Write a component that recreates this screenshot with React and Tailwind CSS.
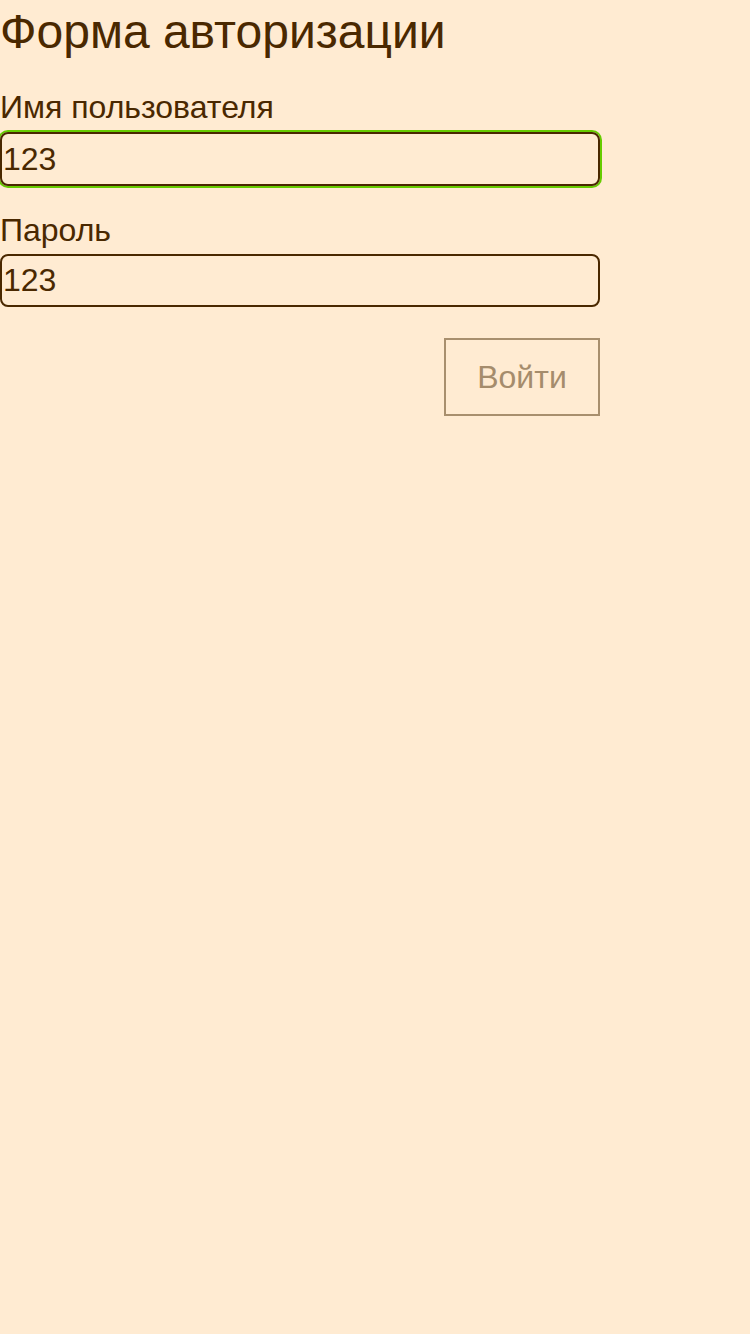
import React, { useState } from "react";

export default function App() {
  const [login, setLogin] = useState("123");
  const [password, setPassword] = useState("123");

  return (
    <div className="min-h-screen bg-[#ffebd2] text-[#4a2800] [font-family:'Liberation_Sans',Arial,sans-serif]">
      <form className="flex w-[600px] flex-col" onSubmit={(e) => e.preventDefault()}>
        <h1 className="pt-[4px] text-[48px] leading-[55px]">Форма авторизации</h1>

        <label className="mt-[30px] text-[32px] leading-[37px]" htmlFor="login">
          Имя пользователя
        </label>
        <input
          id="login"
          value={login}
          onChange={(e) => setLogin(e.target.value)}
          className="mt-[6px] h-[54px] w-full rounded-[8px] border-2 border-[#4a2800] bg-transparent px-[1px] text-[32px] text-[#4a2800] shadow-[0_0_0_2px_#66cc00] outline-none"
        />

        <label className="mt-[26px] text-[32px] leading-[37px]" htmlFor="password">
          Пароль
        </label>
        <input
          id="password"
          type="text"
          value={password}
          onChange={(e) => setPassword(e.target.value)}
          className="mt-[5px] h-[53px] w-full rounded-[8px] border-2 border-[#4a2800] bg-transparent px-[1px] text-[32px] text-[#4a2800] outline-none"
        />

        <div className="mt-[31px] flex justify-end">
          <button
            type="submit"
            disabled
            className="h-[78px] w-[156px] border-2 border-[#a88f6e] text-[32px] text-[#a58c6c]"
          >
            Войти
          </button>
        </div>
      </form>
    </div>
  );
}
